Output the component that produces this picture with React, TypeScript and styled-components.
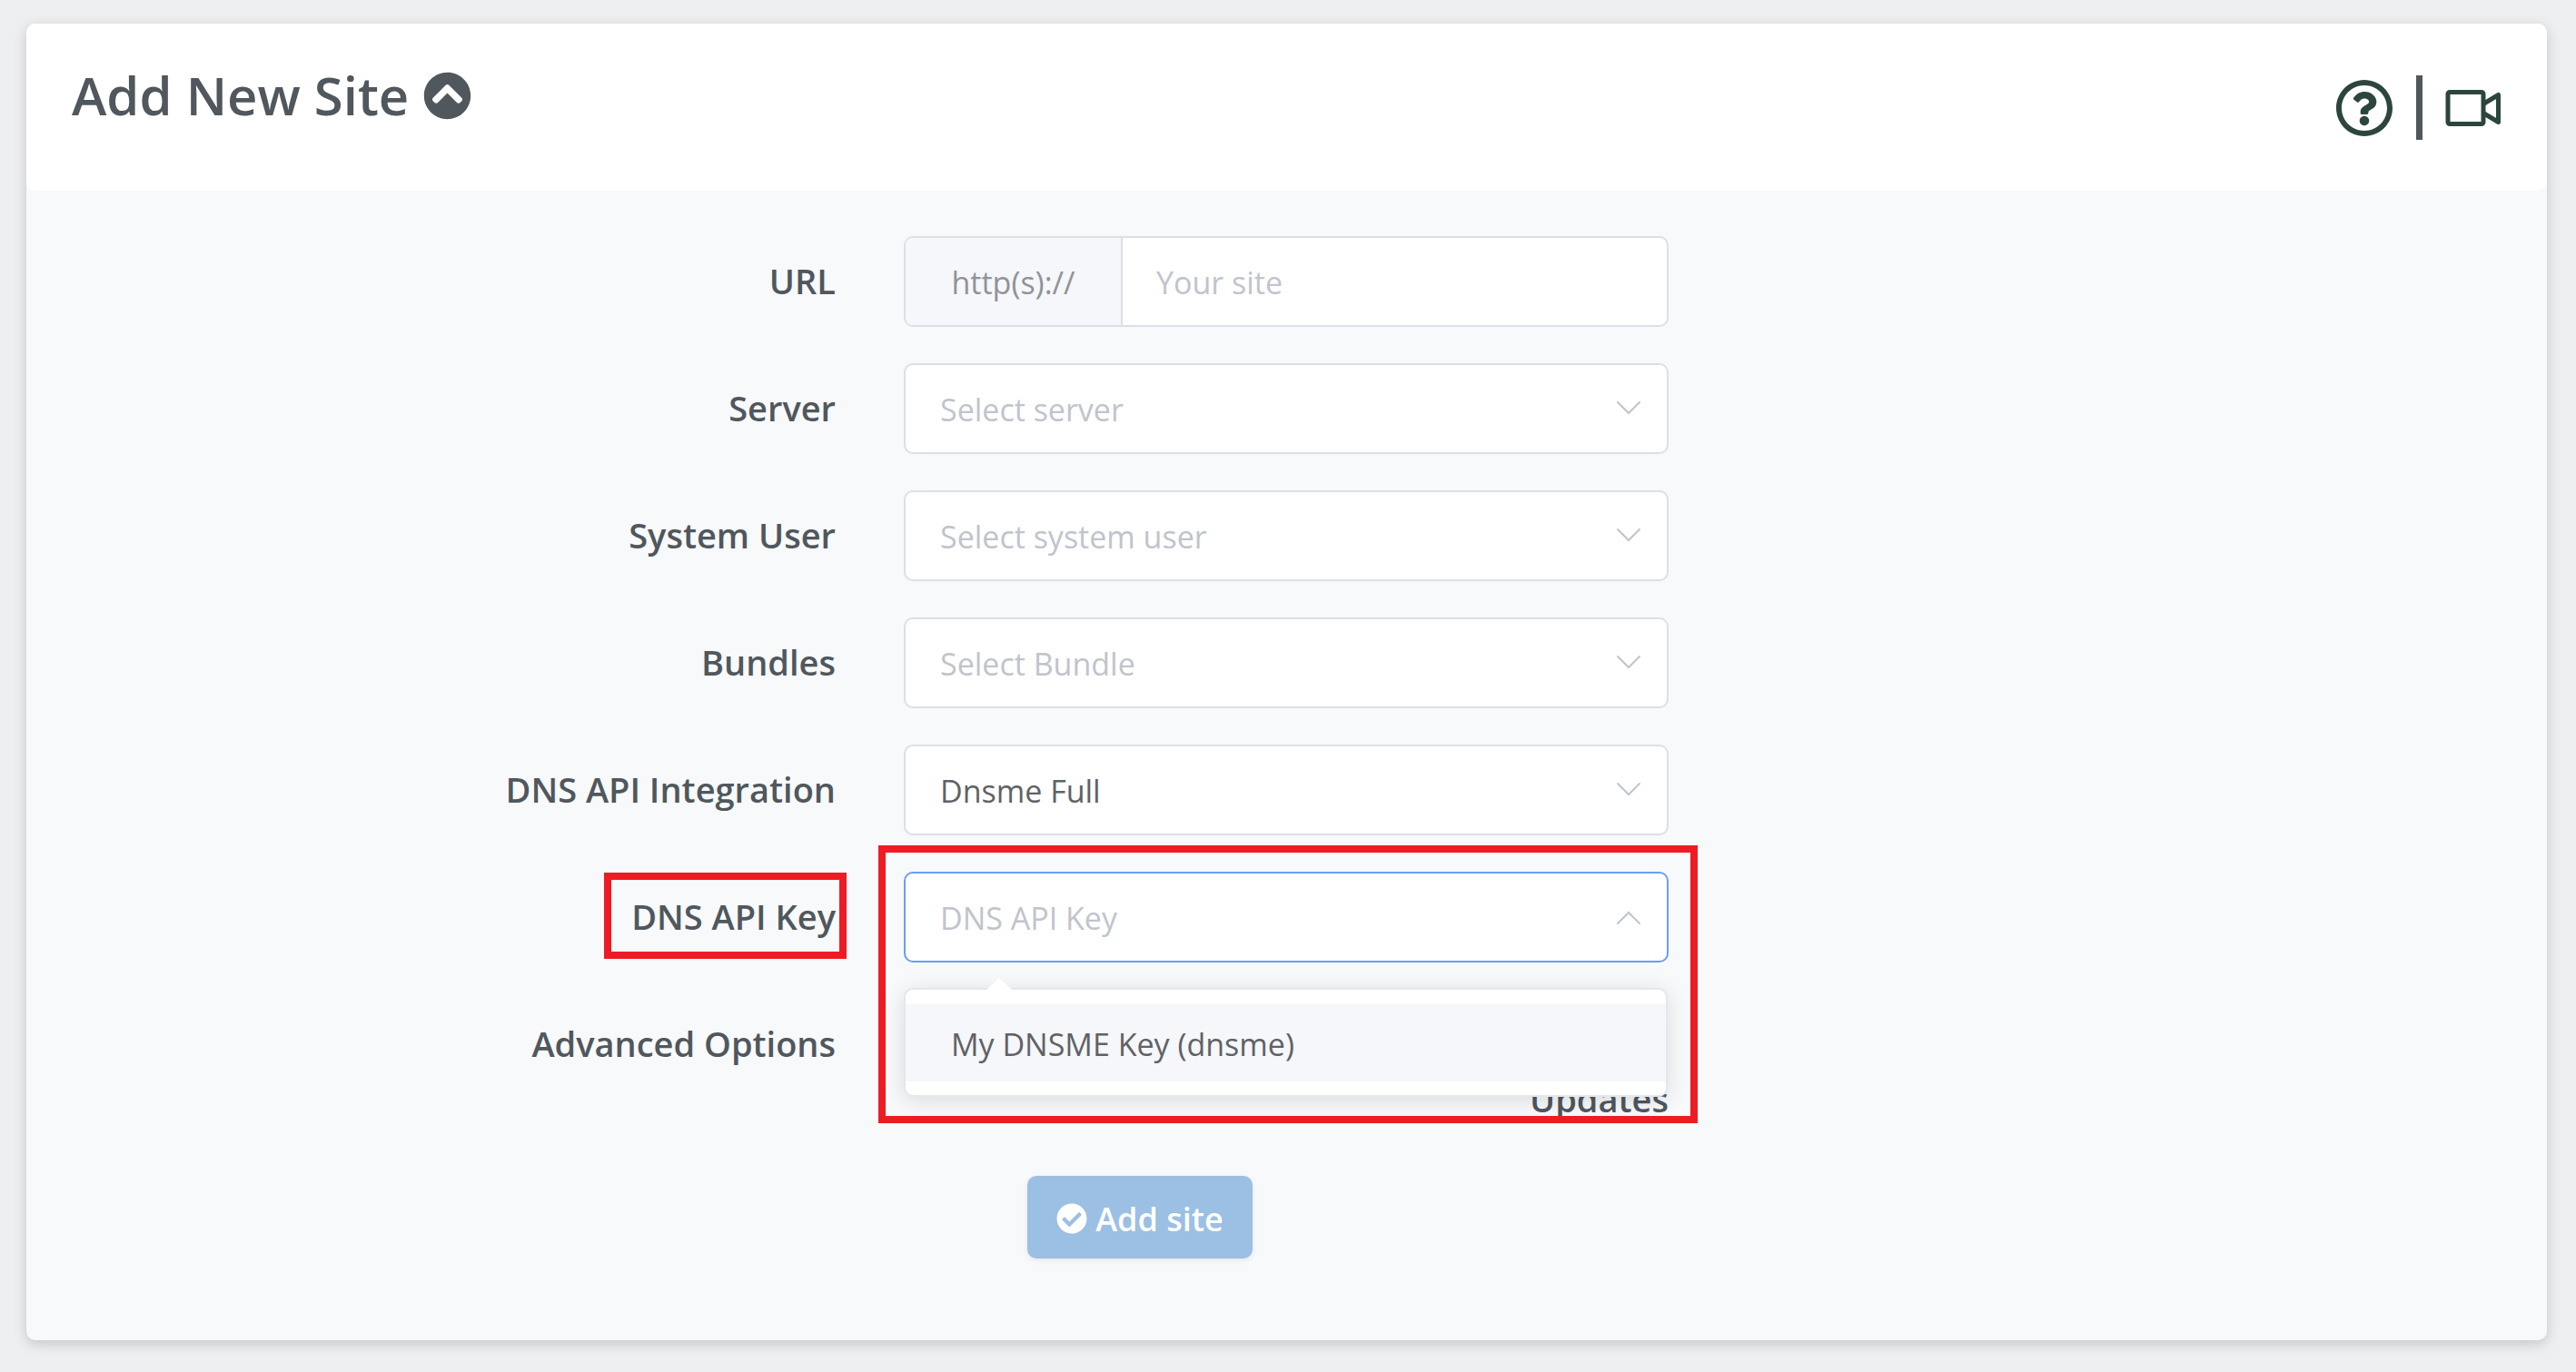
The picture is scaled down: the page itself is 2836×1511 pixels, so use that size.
import React from "react";
import styled, { createGlobalStyle } from "styled-components";
import { FaCheckCircle, FaChevronCircleUp, FaRegQuestionCircle } from "react-icons/fa";

const GlobalStyle = createGlobalStyle`
  *, *::before, *::after { box-sizing: border-box; }
  body {
    margin: 0;
    background: #eeeff1;
    color: #50575d;
    font-family: "Open Sans", "Noto Sans", sans-serif;
    font-size: 34px;
  }
  button, input, select { font: inherit; color: inherit; }
`;

const Page = styled.main`
  padding: 26px 32px 35px 29px;
`;

const Card = styled.section`
  border-radius: 10px;
  background: #f7f9fb;
  box-shadow: 0 4px 14px rgba(60, 66, 76, 0.24);
`;

const CardHeader = styled.header`
  display: flex;
  justify-content: space-between;
  align-items: flex-start;
  height: 184px;
  padding: 40px 50px;
  border-radius: 10px;
  background: #fff;
`;

const Title = styled.h1`
  margin: 0;
  font-size: 58px;
  line-height: 78px;
  font-weight: 600;
`;

const TitleToggle = styled.button`
  display: flex;
  align-items: center;
  gap: 16px;
  padding: 0;
  border: 0;
  background: none;
  cursor: pointer;
`;

const HeaderTools = styled.nav`
  display: flex;
  align-items: center;
  gap: 25px;
  margin-top: 17px;
  color: #2d463d;
`;

const ToolLink = styled.a`
  display: flex;
  color: inherit;
`;

const Divider = styled.span`
  width: 7px;
  height: 71px;
  background: #50575d;
`;

const Form = styled.form`
  display: flex;
  flex-direction: column;
  gap: 40px;
  padding: 50px 12px 90px;
`;

const Row = styled.div`
  display: grid;
  grid-template-columns: repeat(3, 1fr);
  min-height: 100px;
`;

const LabelCell = styled.div`
  display: flex;
  justify-content: flex-end;
  align-items: center;
  height: 98px;
  padding: 0 38px;
`;

const labelFont = `
  font-size: 38px;
  line-height: 60px;
  font-weight: 600;
`;

const Label = styled.label`
  ${labelFont}
`;

const GroupLabel = styled.span`
  ${labelFont}
`;

const FieldCell = styled.div`
  position: relative;
  padding: 0 38px 0 37px;
`;

const InputGroup = styled.div`
  display: flex;
  height: 100px;
  border: 2px solid #dcdfe6;
  border-radius: 10px;
  background: #fff;
  overflow: hidden;
`;

const Prefix = styled.span`
  display: flex;
  align-items: center;
  justify-content: center;
  flex: 0 0 239px;
  padding-top: 2px;
  border-right: 2px solid #dcdfe6;
  background: #f5f7fa;
  color: #909399;
`;

const TextInput = styled.input`
  flex: 1;
  min-width: 0;
  padding: 2px 37px 0;
  border: 0;
  outline: 0;
  background: transparent;
  &::placeholder { color: #c0c4cc; opacity: 1; }
`;

const SelectWrap = styled.div`
  position: relative;
`;

const Select = styled.select<{ $filled?: boolean; $open?: boolean }>`
  display: block;
  width: 100%;
  height: 100px;
  padding: 2px 80px 0 38px;
  border: 2px solid ${(p) => (p.$open ? "#6a9df8" : "#dcdfe6")};
  border-radius: 10px;
  outline: 0;
  appearance: none;
  background: #fff;
  color: ${(p) => (p.$filled ? "#606266" : "#c0c4cc")};
`;

const Caret = styled.svg<{ $up?: boolean }>`
  position: absolute;
  top: ${(p) => (p.$up ? 43 : 41)}px;
  right: 30px;
  width: 28px;
  height: 16px;
  transform: ${(p) => (p.$up ? "rotate(180deg)" : "none")};
  pointer-events: none;
`;

const Menu = styled.ul`
  position: absolute;
  z-index: 1;
  top: 128px;
  left: 37px;
  right: 39px;
  margin: 0;
  padding: 16px 0 15px;
  border: 2px solid #e4e7ed;
  border-radius: 10px;
  background: #fff;
  box-shadow: 0 4px 24px rgba(0, 0, 0, 0.12);
  list-style: none;
  &::before {
    content: "";
    position: absolute;
    top: -13px;
    left: 89px;
    border: solid transparent;
    border-width: 0 14px 13px;
    border-bottom-color: #fff;
  }
`;

const Option = styled.li`
  padding: 3px 50px 0;
  background: #f5f7fa;
  color: #606266;
  line-height: 82px;
`;

const Highlight = styled.span<{ $top: number; $right: number; $bottom: number; $left: number }>`
  position: absolute;
  z-index: 2;
  top: ${(p) => p.$top}px;
  right: ${(p) => p.$right}px;
  bottom: ${(p) => p.$bottom}px;
  left: ${(p) => p.$left}px;
  border: 8px solid #ed1c24;
  pointer-events: none;
`;

const Anchor = styled.span`
  position: relative;
  display: flex;
`;

const OptionGroup = styled.div`
  display: flex;
  justify-content: flex-end;
  padding-top: 80px;
`;

const Actions = styled.div`
  padding: 15px 173px 0;
`;

const SubmitButton = styled.button`
  display: flex;
  align-items: center;
  justify-content: center;
  gap: 9px;
  width: 248px;
  height: 91px;
  padding: 3px 0 0;
  border: 0;
  border-radius: 10px;
  background: #9cbfe4;
  box-shadow: 0 2px 6px rgba(0, 0, 0, 0.08);
  color: #fff;
  font-size: 36px;
  font-weight: 600;
`;

const CaretIcon = ({ up }: { up?: boolean }) => (
  <Caret $up={up} viewBox="0 0 28 16" fill="none" stroke="#c0c4cc" strokeWidth="2" strokeLinecap="round" aria-hidden="true">
    <path d="M2 2 14 14 26 2" />
  </Caret>
);

const VideoIcon = () => (
  <svg width="62" height="42" viewBox="0 0 62 42" fill="none" stroke="currentColor" strokeWidth="5" strokeLinejoin="round" aria-hidden="true">
    <rect x="3" y="3.500" width="39" height="35" rx="2" />
    <path d="M42 16.500 58.500 6.500v30L42 26.500" />
  </svg>
);

const fields = [
  { id: "server", label: "Server", value: "Select server" },
  { id: "user", label: "System User", value: "Select system user" },
  { id: "bundles", label: "Bundles", value: "Select Bundle" },
  { id: "dns", label: "DNS API Integration", value: "Dnsme Full", filled: true },
];

export default function App() {
  return (
    <Page>
      <GlobalStyle />
      <Card>
        <CardHeader>
          <Title>
            <TitleToggle type="button">
              Add New Site
              <FaChevronCircleUp size={53} />
            </TitleToggle>
          </Title>
          <HeaderTools>
            <ToolLink href="#help" aria-label="Help"><FaRegQuestionCircle size={64} /></ToolLink>
            <Divider />
            <ToolLink href="#video" aria-label="Video"><VideoIcon /></ToolLink>
          </HeaderTools>
        </CardHeader>
        <Form onSubmit={(e) => e.preventDefault()}>
          <Row>
            <LabelCell><Label htmlFor="url">URL</Label></LabelCell>
            <FieldCell>
              <InputGroup>
                <Prefix>http(s)://</Prefix>
                <TextInput id="url" placeholder="Your site" />
              </InputGroup>
            </FieldCell>
          </Row>
          {fields.map((f) => (
            <Row key={f.id}>
              <LabelCell><Label htmlFor={f.id}>{f.label}</Label></LabelCell>
              <FieldCell>
                <SelectWrap>
                  <Select id={f.id} $filled={f.filled}><option>{f.value}</option></Select>
                  <CaretIcon />
                </SelectWrap>
              </FieldCell>
            </Row>
          ))}
          <Row>
            <LabelCell>
              <Anchor>
                <Label htmlFor="key">DNS API Key</Label>
                <Highlight $top={-18} $right={-12} $bottom={-17} $left={-30} />
              </Anchor>
            </LabelCell>
            <FieldCell>
              <SelectWrap>
                <Select id="key" $open><option>DNS API Key</option></Select>
                <CaretIcon up />
              </SelectWrap>
              <Menu><Option>My DNSME Key (dnsme)</Option></Menu>
              <Highlight $top={-29} $right={6} $bottom={-177} $left={9} />
            </FieldCell>
          </Row>
          <Row>
            <LabelCell><GroupLabel>Advanced Options</GroupLabel></LabelCell>
            <FieldCell>
              <OptionGroup><GroupLabel>Updates</GroupLabel></OptionGroup>
            </FieldCell>
          </Row>
          <Row>
            <span />
            <Actions>
              <SubmitButton type="submit"><FaCheckCircle size={34} />Add site</SubmitButton>
            </Actions>
          </Row>
        </Form>
      </Card>
    </Page>
  );
}
